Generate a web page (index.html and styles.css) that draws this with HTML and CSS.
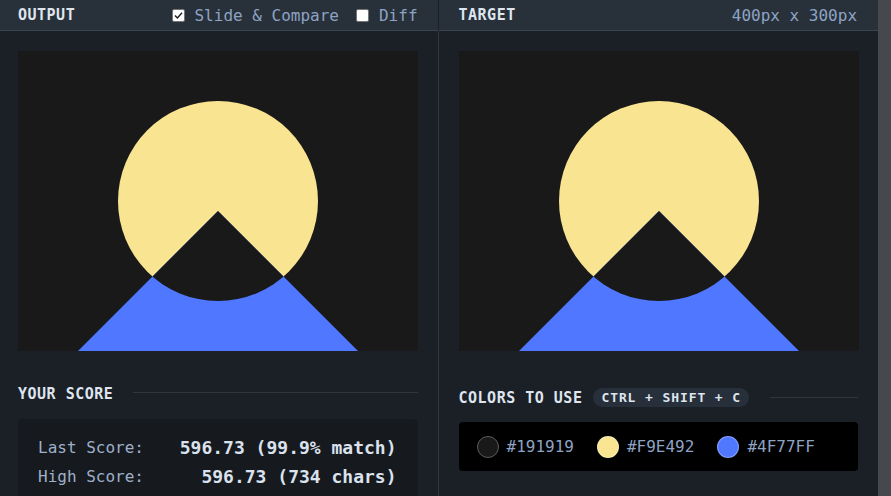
FILE: index.html
```html
<!DOCTYPE html>
<html>
<head>
<meta charset="utf-8">
<link rel="stylesheet" href="styles.css">
</head>
<body>
<div class="app">
  <section class="panel panel-left">
    <header class="bar">
      <span class="title">OUTPUT</span>
      <div class="opts">
        <label class="opt"><span class="box"><svg width="11" height="11" viewBox="0 0 11 11"><path d="M2 5.6 L4.4 8 L9 2.8" fill="none" stroke="#1d1d1d" stroke-width="1.4"/></svg></span>Slide &amp; Compare</label>
        <label class="opt"><span class="box"></span>Diff</label>
      </div>
    </header>
    <div class="body">
      <div class="canvas">
        <svg width="400" height="300" viewBox="0 0 400 300">
          <defs><clipPath id="c1"><circle cx="200" cy="150" r="100"/></clipPath></defs>
          <rect width="400" height="300" fill="#191919"/>
          <circle cx="200" cy="150" r="100" fill="#F9E492"/>
          <polygon points="200,160 60,300 340,300" fill="#4F77FF"/>
          <polygon points="200,160 60,300 340,300" fill="#191919" clip-path="url(#c1)"/>
        </svg>
      </div>
      <div class="heading heading-score"><span class="title">YOUR SCORE</span><span class="rule"></span></div>
      <div class="scorebox">
        <div class="row"><span class="lbl">Last Score:</span><span class="val">596.73 (99.9% match)</span></div>
        <div class="row"><span class="lbl">High Score:</span><span class="val">596.73 (734 chars)</span></div>
      </div>
    </div>
  </section>
  <div class="divider"></div>
  <section class="panel panel-right">
    <header class="bar">
      <span class="title">TARGET</span>
      <span class="dim">400px x 300px</span>
    </header>
    <div class="body">
      <div class="canvas">
        <svg width="400" height="300" viewBox="0 0 400 300">
          <defs><clipPath id="c2"><circle cx="200" cy="150" r="100"/></clipPath></defs>
          <rect width="400" height="300" fill="#191919"/>
          <circle cx="200" cy="150" r="100" fill="#F9E492"/>
          <polygon points="200,160 60,300 340,300" fill="#4F77FF"/>
          <polygon points="200,160 60,300 340,300" fill="#191919" clip-path="url(#c2)"/>
        </svg>
      </div>
      <div class="heading heading-colors"><span class="title">COLORS TO USE</span><span class="pill">CTRL + SHIFT + C</span><span class="rule"></span></div>
      <div class="colorbox">
        <div class="swatch"><span class="dot dot-dark"></span><span class="hex">#191919</span></div>
        <div class="swatch"><span class="dot dot-yellow"></span><span class="hex">#F9E492</span></div>
        <div class="swatch"><span class="dot dot-blue"></span><span class="hex">#4F77FF</span></div>
      </div>
    </div>
  </section>
  <div class="scrollbar"></div>
</div>
</body>
</html>
```

FILE: styles.css
```css
* { box-sizing: border-box; }
html, body { margin: 0; padding: 0; }
body {
  background: #1b1f26;
  font-family: "DejaVu Sans Mono", "Liberation Mono", monospace;
  overflow: hidden;
  height: 496px;
}
.app {
  display: flex;
  height: 496px;
  overflow: hidden;
}
.panel { display: flex; flex-direction: column; overflow: hidden; }
.panel > * { flex-shrink: 0; }
.body > * { flex-shrink: 0; }
.panel-left { width: 438px; }
.panel-right { width: 440px; }
.divider { width: 1px; background: #2f3842; margin-top: 31px; }
.scrollbar { width: 13px; background: #45494e; }

.bar {
  height: 31px;
  background: #28313a;
  border-bottom: 1px solid #3a4450;
  display: flex;
  align-items: center;
  justify-content: space-between;
  padding: 0 20px 0 18px;
}
.panel-right .bar { padding: 0 21px 0 20px; }
.title {
  font-weight: bold;
  font-size: 15px;
  letter-spacing: 0.5px;
  color: #dfe5ee;
}
.opts { display: flex; align-items: center; gap: 17px; }
.opt {
  display: flex;
  align-items: center;
  gap: 10px;
  font-size: 16px;
  color: #8ea3c4;
}
.opt:first-child { gap: 9px; }
.box {
  width: 13px;
  height: 13px;
  background: #fff;
  border: 1px solid #767676;
  border-radius: 2px;
  display: flex;
  align-items: center;
  justify-content: center;
}
.dim { font-size: 16px; color: #8ea3c4; }

.body { padding: 20px 20px 0 18px; display: flex; flex-direction: column; }
.panel-right .body { padding: 20px 20px 0 20px; }
.canvas { width: 400px; height: 300px; }
.canvas svg { display: block; }

.heading { display: flex; align-items: center; }
.heading-score { margin-top: 33px; height: 20px; }
.heading-score .rule { margin-left: 20px; margin-top: -3px; }
.heading-colors { margin-top: 37px; height: 19px; }
.rule { flex: 1; height: 1px; background: #2e3640; }
.pill {
  margin-left: 11px;
  height: 19px;
  padding: 0 8px 0 8px;
  border-radius: 10px;
  background: #27303a;
  color: #dfe5ee;
  font-weight: bold;
  font-size: 13px;
  letter-spacing: 0.9px;
  display: flex;
  align-items: center;
}
.heading-colors .rule { margin-left: 21px; }

.scorebox {
  margin-top: 15px;
  background: #161a1f;
  border-radius: 4px;
  padding: 14px 21px 20px 20px;
}
.row {
  display: flex;
  justify-content: space-between;
  align-items: center;
  height: 29px;
}
.lbl { font-size: 16px; color: #9fb0c9; }
.val { font-size: 18px; font-weight: bold; color: #dbe2ee; }

.colorbox {
  margin-top: 15px;
  height: 49px;
  background: #000;
  border-radius: 4px;
  display: flex;
  align-items: center;
  padding-left: 18px;
  gap: 23px;
}
.swatch { display: flex; align-items: center; gap: 8px; }
.dot {
  width: 22px;
  height: 22px;
  border-radius: 50%;
  border: 1px solid rgba(255,255,255,0.3);
}
.dot-dark { background: #191919; border-color: #5c5c5c; }
.dot-yellow { background: #F9E492; }
.dot-blue { background: #4F77FF; }
.hex { font-size: 16px; color: #8ea3c4; }
```
